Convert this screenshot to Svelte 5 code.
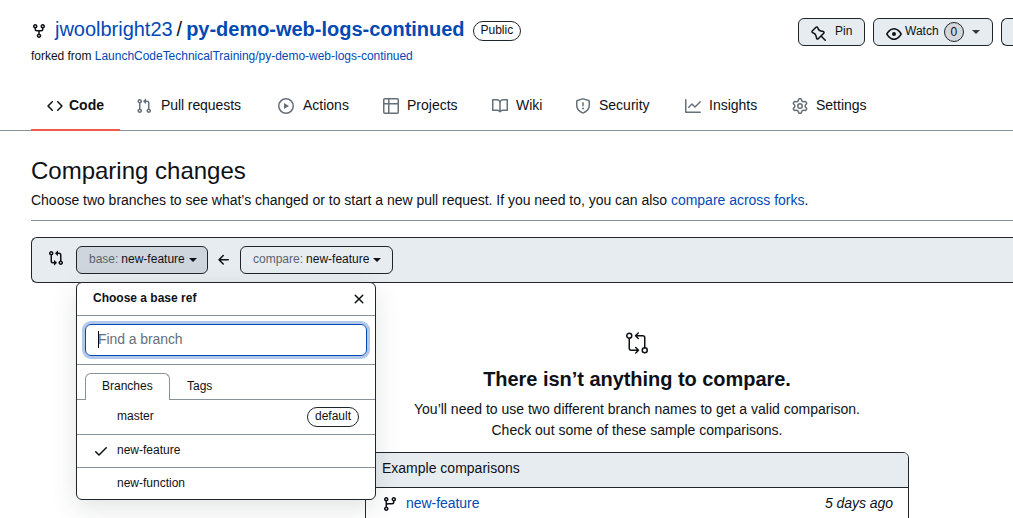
<script>
  const icons = {
    fork: 'M5 3.25a.75.75 0 11-1.5 0 .75.75 0 011.5 0zm0 2.122a2.25 2.25 0 10-1.5 0v.878A2.25 2.25 0 005.75 8.5h1.5v2.128a2.251 2.251 0 101.5 0V8.5h1.5a2.25 2.25 0 002.25-2.25v-.878a2.25 2.25 0 10-1.5 0v.878a.75.75 0 01-.75.75h-4.5A.75.75 0 015 6.25v-.878zm3.75 7.378a.75.75 0 11-1.5 0 .75.75 0 011.5 0zm3-8.75a.75.75 0 100-1.5.75.75 0 000 1.5z',
    code: 'M4.72 3.22a.75.75 0 011.06 1.06L2.06 8l3.72 3.72a.75.75 0 11-1.06 1.06L.47 8.53a.75.75 0 010-1.06l4.25-4.25zm6.56 0a.75.75 0 10-1.06 1.06L13.94 8l-3.72 3.72a.75.75 0 101.06 1.06l4.25-4.25a.75.75 0 000-1.06l-4.25-4.25z',
    pull: 'M7.177 3.073L9.573.677A.25.25 0 0110 .854v4.792a.25.25 0 01-.427.177L7.177 3.427a.25.25 0 010-.354zM3.75 2.5a.75.75 0 100 1.5.75.75 0 000-1.5zm-2.25.75a2.25 2.25 0 113 2.122v5.256a2.251 2.251 0 11-1.5 0V5.372A2.25 2.25 0 011.5 3.25zM11 2.5h-1V4h1a1 1 0 011 1v5.628a2.251 2.251 0 101.5 0V5A2.5 2.5 0 0011 2.5zm1 10.25a.75.75 0 111.5 0 .75.75 0 01-1.5 0zM3.75 12a.75.75 0 100 1.5.75.75 0 000-1.5z',
    play: 'M1.5 8a6.5 6.5 0 1113 0 6.5 6.5 0 01-13 0zM8 0a8 8 0 100 16A8 8 0 008 0zM6.379 5.227A.25.25 0 006 5.442v5.117a.25.25 0 00.379.214l4.264-2.559a.25.25 0 000-.428L6.379 5.227z',
    table: 'M0 1.75C0 .784.784 0 1.75 0h12.5C15.216 0 16 .784 16 1.75v12.5A1.75 1.75 0 0114.25 16H1.75A1.75 1.75 0 010 14.25V1.75zM1.5 6.5v7.75c0 .138.112.25.25.25H5v-8H1.5zM5 5V1.5H1.75a.25.25 0 00-.25.25V5H5zm1.5 1.5v8h7.75a.25.25 0 00.25-.25V6.5h-8zm8-1.5V1.75a.25.25 0 00-.25-.25H6.5V5h8z',
    book: 'M0 1.75A.75.75 0 01.75 1h4.253c1.227 0 2.317.59 3 1.501A3.744 3.744 0 0111.006 1h4.245a.75.75 0 01.75.75v10.5a.75.75 0 01-.75.75h-4.507a2.25 2.25 0 00-1.591.659l-.622.621a.75.75 0 01-1.06 0l-.622-.621A2.25 2.25 0 005.258 13H.75a.75.75 0 01-.75-.75V1.75zm8.755 3a2.25 2.25 0 012.25-2.25H14.5v9h-3.757c-.71 0-1.4.201-1.992.572l.004-7.322zm-1.504 7.324l.004-5.073-.002-2.253A2.25 2.25 0 005.003 2.5H1.5v9h3.757a3.75 3.75 0 011.994.574z',
    shield: 'M7.467.133a1.75 1.75 0 011.066 0l5.25 1.68A1.75 1.75 0 0115 3.48V7c0 1.566-.32 3.182-1.303 4.682-.983 1.498-2.585 2.813-5.032 3.855a1.7 1.7 0 01-1.33 0c-2.447-1.042-4.049-2.357-5.032-3.855C1.32 10.182 1 8.566 1 7V3.48a1.75 1.75 0 011.217-1.667l5.25-1.68zm.61 1.429a.25.25 0 00-.153 0l-5.25 1.68a.25.25 0 00-.174.238V7c0 1.358.275 2.666 1.057 3.86.784 1.194 2.121 2.34 4.366 3.297a.2.2 0 00.154 0c2.245-.956 3.582-2.104 4.366-3.298C13.225 9.666 13.5 8.36 13.5 7V3.48a.25.25 0 00-.174-.237l-5.25-1.68zM9 10.5a1 1 0 11-2 0 1 1 0 012 0zm-.25-5.75a.75.75 0 10-1.5 0v3a.75.75 0 001.5 0v-3z',
    graph: 'M1.5 1.75a.75.75 0 00-1.5 0v12.5c0 .414.336.75.75.75h14.5a.75.75 0 000-1.5H1.5V1.75zm14.28 2.53a.75.75 0 00-1.06-1.06L10 7.94 7.53 5.47a.75.75 0 00-1.06 0L3.22 8.72a.75.75 0 001.06 1.06L7 7.06l2.47 2.47a.75.75 0 001.06 0l5.25-5.25z',
    gear: 'M7.429 1.525a6.593 6.593 0 011.142 0c.036.003.108.036.137.146l.289 1.105c.147.56.55.967.997 1.189.174.086.341.183.501.29.417.278.97.423 1.53.27l1.102-.303c.11-.03.175.016.195.046.219.31.41.641.573.989.014.031.022.11-.059.19l-.815.806c-.411.406-.562.957-.53 1.456a4.588 4.588 0 010 .582c-.032.499.119 1.05.53 1.456l.815.806c.08.08.073.159.059.19a6.494 6.494 0 01-.573.99c-.02.029-.086.074-.195.045l-1.103-.303c-.559-.153-1.112-.008-1.529.27-.16.107-.327.204-.5.29-.449.222-.851.628-.998 1.189l-.289 1.105c-.029.11-.101.143-.137.146a6.613 6.613 0 01-1.142 0c-.036-.003-.108-.037-.137-.146l-.289-1.105c-.147-.56-.55-.967-.997-1.189a4.502 4.502 0 01-.501-.29c-.417-.278-.97-.423-1.53-.27l-1.102.303c-.11.03-.175-.016-.195-.046a6.492 6.492 0 01-.573-.989c-.014-.031-.022-.11.059-.19l.815-.806c.411-.406.562-.957.53-1.456a4.587 4.587 0 010-.582c.032-.499-.119-1.05-.53-1.456l-.815-.806c-.08-.08-.073-.159-.059-.19a6.44 6.44 0 01.573-.99c.02-.029.086-.075.195-.045l1.103.303c.559.153 1.112.008 1.529-.27.16-.107.327-.204.5-.29.449-.222.851-.628.998-1.189l.289-1.105c.029-.11.101-.143.137-.146zM8 0c-.236 0-.47.01-.701.03-.743.065-1.29.615-1.458 1.261l-.29 1.106c-.017.066-.078.158-.211.224a5.994 5.994 0 00-.668.386c-.123.082-.233.09-.3.071L3.27 2.776c-.644-.177-1.392.02-1.82.63a7.977 7.977 0 00-.704 1.217c-.315.675-.111 1.422.363 1.891l.815.806c.05.048.098.147.088.294a6.084 6.084 0 000 .772c.01.147-.038.246-.088.294l-.815.806c-.474.469-.678 1.216-.363 1.891.2.428.436.835.704 1.218.428.609 1.176.806 1.82.63l1.103-.303c.066-.019.176-.011.299.071.213.143.436.272.668.386.133.066.194.158.212.224l.289 1.106c.169.646.715 1.196 1.458 1.26a8.094 8.094 0 001.402 0c.743-.064 1.29-.614 1.458-1.26l.29-1.106c.017-.066.078-.158.211-.224a5.98 5.98 0 00.668-.386c.123-.082.233-.09.3-.071l1.102.302c.644.177 1.392-.02 1.82-.63.268-.382.505-.789.704-1.217.315-.675.111-1.422-.364-1.891l-.814-.806c-.05-.048-.098-.147-.088-.294a6.1 6.1 0 000-.772c-.01-.147.039-.246.088-.294l.814-.806c.475-.469.679-1.216.364-1.891a7.992 7.992 0 00-.704-1.218c-.428-.609-1.176-.806-1.82-.63l-1.103.303c-.066.019-.176.011-.299-.071a5.991 5.991 0 00-.668-.386c-.133-.066-.194-.158-.212-.224L10.16 1.29C9.99.645 9.444.095 8.701.031A8.094 8.094 0 008 0zm1.5 8a1.5 1.5 0 11-3 0 1.5 1.5 0 013 0zM11 8a3 3 0 11-6 0 3 3 0 016 0z',
    pin: 'M4.456.734a1.75 1.75 0 012.826.504l.613 1.327a3.081 3.081 0 002.084 1.707l2.454.584c1.332.317 1.8 1.972.832 2.94L11.06 10l3.72 3.72a.75.75 0 11-1.061 1.06L10 11.06l-2.204 2.205c-.968.968-2.623.5-2.94-.832l-.584-2.454a3.081 3.081 0 00-1.707-2.084l-1.327-.613a1.75 1.75 0 01-.504-2.826L4.456.734zM5.92 1.866a.25.25 0 00-.404-.072L1.794 5.516a.25.25 0 00.072.404l1.328.613A4.582 4.582 0 015.73 9.63l.584 2.454a.25.25 0 00.42.12l5.47-5.47a.25.25 0 00-.12-.42L9.63 5.73a4.581 4.581 0 01-3.098-2.537L5.92 1.866z',
    eye: 'M1.679 7.932c.412-.621 1.242-1.75 2.366-2.717C5.175 4.242 6.527 3.5 8 3.5c1.473 0 2.824.742 3.955 1.715 1.124.967 1.954 2.096 2.366 2.717a.119.119 0 010 .136c-.412.621-1.242 1.75-2.366 2.717C10.825 11.758 9.473 12.5 8 12.5c-1.473 0-2.824-.742-3.955-1.715C2.92 9.818 2.09 8.69 1.679 8.068a.119.119 0 010-.136zM8 2c-1.981 0-3.67.992-4.933 2.078C1.797 5.169.88 6.423.43 7.1a1.619 1.619 0 000 1.798c.45.678 1.367 1.932 2.637 3.024C4.329 13.008 6.019 14 8 14c1.981 0 3.67-.992 4.933-2.078 1.27-1.091 2.187-2.345 2.637-3.023a1.619 1.619 0 000-1.798c-.45-.678-1.367-1.932-2.637-3.023C11.671 2.992 9.981 2 8 2zm0 8a2 2 0 100-4 2 2 0 000 4z',
    compare: 'M9.573.677L7.177 3.073a.25.25 0 000 .354l2.396 2.396A.25.25 0 0010 5.646V4h1a1 1 0 011 1v5.628a2.251 2.251 0 101.5 0V5A2.5 2.5 0 0011 2.5h-1V.854a.25.25 0 00-.427-.177zM6 12v-1.646a.25.25 0 01.427-.177l2.396 2.396a.25.25 0 010 .354l-2.396 2.396A.25.25 0 016 15.146V13.5H5A2.5 2.5 0 012.5 11V5.372a2.25 2.25 0 111.5 0V11a1 1 0 001 1h1zm6.75 0a.75.75 0 100 1.5.75.75 0 000-1.5zM4 3.25a.75.75 0 11-1.5 0 .75.75 0 011.5 0z',
    arrow: 'M7.78 12.53a.75.75 0 01-1.06 0L2.47 8.28a.75.75 0 010-1.06l4.25-4.25a.75.75 0 011.06 1.06L4.81 7h7.44a.75.75 0 010 1.5H4.81l2.97 2.97a.75.75 0 010 1.06z',
    x: 'M3.72 3.72a.75.75 0 011.06 0L8 6.94l3.22-3.22a.75.75 0 111.06 1.06L9.06 8l3.22 3.22a.75.75 0 11-1.06 1.06L8 9.06l-3.22 3.22a.75.75 0 01-1.06-1.06L6.94 8 3.72 4.78a.75.75 0 010-1.06z',
    check: 'M13.78 4.22a.75.75 0 010 1.06l-7.25 7.25a.75.75 0 01-1.06 0L2.22 9.28a.75.75 0 011.06-1.06L6 10.94l6.72-6.72a.75.75 0 011.06 0z',
    branch: 'M11.75 2.5a.75.75 0 100 1.5.75.75 0 000-1.5zm-2.25.75a2.25 2.25 0 113 2.122V6A2.5 2.5 0 0110 8.5H6a1 1 0 00-1 1v1.128a2.251 2.251 0 11-1.5 0V5.372a2.25 2.25 0 111.5 0v1.836A2.492 2.492 0 016 7h4a1 1 0 001-1v-.628A2.25 2.25 0 019.5 3.25zM4.25 12a.75.75 0 100 1.5.75.75 0 000-1.5zM3.5 3.25a.75.75 0 111.5 0 .75.75 0 01-1.5 0z'
  };
  const tabs = [
    { glyph: 'code', text: 'Code', width: 89 },
    { glyph: 'pull', text: 'Pull requests', width: 142 },
    { glyph: 'play', text: 'Actions', width: 105 },
    { glyph: 'table', text: 'Projects', width: 109 },
    { glyph: 'book', text: 'Wiki', width: 83 },
    { glyph: 'shield', text: 'Security', width: 110 },
    { glyph: 'graph', text: 'Insights', width: 107 },
    { glyph: 'gear', text: 'Settings', width: 110 }
  ];
  const branches = ['master', 'new-feature', 'new-function'];
</script>

{#snippet icon(name)}
  <svg class="icon" viewBox="0 0 16 16" width="16" height="16" aria-hidden="true"><path fill-rule="evenodd" d={icons[name]} /></svg>
{/snippet}

<div class="page">
  <header>
    <div class="titlebar">
      <div class="repo">
        <div class="name">
          {@render icon('fork')}
          <a class="owner" href="#owner">jwoolbright23</a><span class="slash">/</span><a class="title" href="#repo">py-demo-web-logs-continued</a>
          <span class="label">Public</span>
        </div>
        <div class="forked">forked from <a href="#upstream">LaunchCodeTechnicalTraining/py-demo-web-logs-continued</a></div>
      </div>
      <div class="actions">
        <button class="btn pin">{@render icon('pin')}<span>Pin</span></button>
        <button class="btn watch">{@render icon('eye')}<span>Watch</span><span class="counter">0</span><i class="caret"></i></button>
        <button class="btn next" aria-label="More"></button>
      </div>
    </div>
    <nav>
      {#each tabs as tab, i}
        <a class="tab" class:selected={i === 0} href="#{tab.glyph}" style:width="{tab.width}px">{@render icon(tab.glyph)}<span>{tab.text}</span></a>
      {/each}
    </nav>
  </header>

  <main>
    <h1>Comparing changes</h1>
    <p class="lead">Choose two branches to see what’s changed or to start a new pull request. If you need to, you can also <a href="#forks">compare across forks</a>.</p>
    <div class="range">
      <span class="range-icon">{@render icon('compare')}</span>
      <div class="picker">
        <button class="btn base"><span class="muted">base:</span><span>new-feature</span><i class="caret"></i></button>
        <div class="menu">
          <div class="menu-head"><strong>Choose a base ref</strong>{@render icon('x')}</div>
          <div class="filter"><div class="input"><i class="cursor"></i>Find a branch</div></div>
          <div class="menu-tabs"><span class="menu-tab on">Branches</span><span class="menu-tab">Tags</span></div>
          {#each branches as branch, i}
            <div class="item">
              <span class="tick">{#if i === 1}{@render icon('check')}{/if}</span>
              <span class="branch">{branch}</span>
              {#if i === 0}<span class="label">default</span>{/if}
            </div>
          {/each}
        </div>
      </div>
      <span class="arrow">{@render icon('arrow')}</span>
      <button class="btn compare"><span class="muted">compare:</span><span>new-feature</span><i class="caret"></i></button>
    </div>

    <section class="blank">
      <svg class="big" viewBox="0 0 24 24" width="24" height="24" fill="none" stroke="currentColor" stroke-width="1.5" stroke-linecap="round" stroke-linejoin="round" aria-hidden="true">
        <circle cx="4.25" cy="4.75" r="2.5" /><circle cx="19.75" cy="19.25" r="2.5" />
        <path d="M4.25 7.25v10a2 2 0 0 0 2 2h7M10.75 16.5l2.75 2.75L10.75 22M19.75 16.75v-10a2 2 0 0 0-2-2h-7M13.25 2L10.5 4.75l2.75 2.75" />
      </svg>
      <h3>There isn’t anything to compare.</h3>
      <p>You’ll need to use two different branch names to get a valid comparison.<br />Check out some of these sample comparisons.</p>
      <div class="box">
        <div class="box-head">Example comparisons</div>
        <div class="box-row">{@render icon('branch')}<a href="#new-feature">new-feature</a><em>5 days ago</em></div>
      </div>
    </section>
  </main>
</div>

<style>
  :global(body) { margin: 0; background: #fff; }
  * { box-sizing: border-box; }
  .page { width: 1013px; height: 518px; overflow: hidden; font: 14px/21px "Liberation Sans", Arial, sans-serif; color: #0e1116; }
  a { color: #0349b4; text-decoration: none; }
  .icon { fill: currentColor; flex: none; display: block; }
  header { height: 131px; display: flex; flex-direction: column; justify-content: space-between; border-bottom: 1px solid #88929d; }
  .titlebar { display: flex; justify-content: space-between; padding: 14px 0 0 31px; }
  .name { display: flex; align-items: center; height: 30px; font-size: 20px; line-height: 30px; white-space: nowrap; letter-spacing: -.02px; }
  .name .icon { margin: 3px 8px 0 0; }
  .slash { margin: 0 4px; }
  .title { font-weight: bold; }
  .label { display: inline-flex; align-items: center; height: 20px; padding: 0 7px 2px; border: 1px solid #20252c; border-radius: 10px; font-size: 12px; line-height: 18px; letter-spacing: 0; }
  .name .label { width: 48px; margin: 3px 0 0 8px; }
  .forked { padding-top: 1px; font-size: 12px; line-height: 22px; letter-spacing: -.02px; }
  .actions { display: flex; gap: 8px; padding-top: 4px; }
  .btn { display: flex; align-items: center; height: 28px; padding: 0 12px; border: 1px solid #20252c; border-radius: 6px; background: #e7ecf0; color: #0e1116; font: 12px/20px "Liberation Sans", Arial, sans-serif; white-space: nowrap; }
  .btn > span { position: relative; top: -1px; }
  .caret { width: 0; height: 0; border: 4px solid transparent; border-top-color: currentColor; border-bottom: 0; margin-left: 4px; }
  .pin { width: 67px; gap: 8px; }
  .pin .icon, .watch .icon { margin-top: 3px; }
  .watch { width: 120px; }
  .watch .icon { margin-right: 3px; }
  .watch .counter { display: flex; align-items: center; justify-content: center; width: 21px; height: 20px; margin: 0 4px 0 5px; border: 1px solid #20252c; border-radius: 10px; background: #d3d7dc; top: 0; }
  .watch .caret { color: #30363d; }
  .next { width: 12px; padding: 0; border-right: 0; border-radius: 6px 0 0 6px; }
  nav { display: flex; padding-left: 31px; margin-bottom: -1px; }
  .tab { display: flex; flex: none; align-items: center; height: 51px; padding: 2px 0 0 16px; gap: 8px; color: #0e1116; border-bottom: 2px solid transparent; }
  .tab:nth-child(2), .tab:nth-child(3) { gap: 9px; }
  .tab:nth-child(2) { letter-spacing: -.08px; }
  .tab .icon { color: #66707b; margin-top: 1px; }
  .tab.selected { gap: 6px; border-color: #ef5b48; font-weight: bold; }
  .tab.selected .icon { color: #0e1116; }
  main { padding-left: 31px; }
  h1 { margin: 0; padding-top: 22px; font-size: 24px; line-height: 36px; font-weight: normal; }
  .lead { margin: 0 0 16px; height: 32px; padding-top: 1px; border-bottom: 1px solid #88929d; white-space: nowrap; letter-spacing: -.018px; }
  .range { display: flex; align-items: center; height: 46px; border: 1px solid #20252c; border-right: 0; border-radius: 6px 0 0 6px; background: #e7ecf0; }
  .range-icon { width: 44px; padding: 0 0 4px 16px; }
  .picker { position: relative; }
  .btn .muted { color: #59636e; margin-right: 3px; }
  .base { width: 132px; background: #ced5dc; }
  .compare { width: 153px; }
  .arrow { margin: 0 8px; }
  .menu { position: absolute; left: 0; top: 36px; z-index: 2; width: 300px; height: 218px; border: 1px solid #20252c; border-radius: 6px; background: #fff; box-shadow: 0 8px 24px rgba(66, 74, 83, .15); font-size: 12px; line-height: 18px; }
  .menu-head { display: flex; justify-content: space-between; height: 33px; padding: 6px 8px 0 16px; border-bottom: 1px solid #88929d; }
  .menu-head .icon { margin-top: 2px; }
  .filter { height: 49px; padding: 8px; border-bottom: 1px solid #88929d; }
  .input { display: flex; align-items: center; height: 32px; padding: 0 12px 2px; border: 1px solid #0349b4; border-radius: 6px; box-shadow: 0 0 0 3px #b3c8e8; font-size: 14px; color: #66707b; letter-spacing: -.08px; }
  .cursor { width: 1px; height: 17px; margin-right: -1px; background: #000; }
  .menu-tabs { display: flex; height: 35px; padding: 8px 8px 0; border-bottom: 1px solid #88929d; }
  .menu-tab { height: 27px; padding: 3px 16px; border: 1px solid transparent; border-bottom: 0; }
  .on { width: 85px; border-color: #88929d; border-radius: 6px 6px 0 0; background: #fff; }
  .item { display: flex; align-items: center; height: 33px; padding: 0 16px; border-bottom: 1px solid #88929d; }
  .item:nth-of-type(4) { height: 35px; }
  .item:last-child { height: 31px; border-bottom: 0; }
  .tick { width: 24px; }
  .branch { flex: 1; padding-bottom: 2px; }
  .blank { width: 544px; margin: 48px 0 0 334px; text-align: center; }
  .big { display: block; margin: 0 auto; }
  h3 { margin: 9px 0 5px; font-size: 20px; line-height: 30px; letter-spacing: -.04px; }
  .blank p { margin: 0; white-space: nowrap; }
  .box { margin-top: 11px; height: 90px; border: 1px solid #20252c; border-radius: 6px; text-align: left; }
  .box-head { height: 35px; padding: 5px 16px; border-bottom: 1px solid #20252c; border-radius: 5px 5px 0 0; background: #e7ecf0; }
  .box-row { display: flex; align-items: center; height: 32px; padding: 0 15px 0 16px; }
  .box-row a { flex: 1; margin-left: 8px; }
  .box-row a, .box-row em { padding-bottom: 2px; letter-spacing: -.05px; }
</style>
